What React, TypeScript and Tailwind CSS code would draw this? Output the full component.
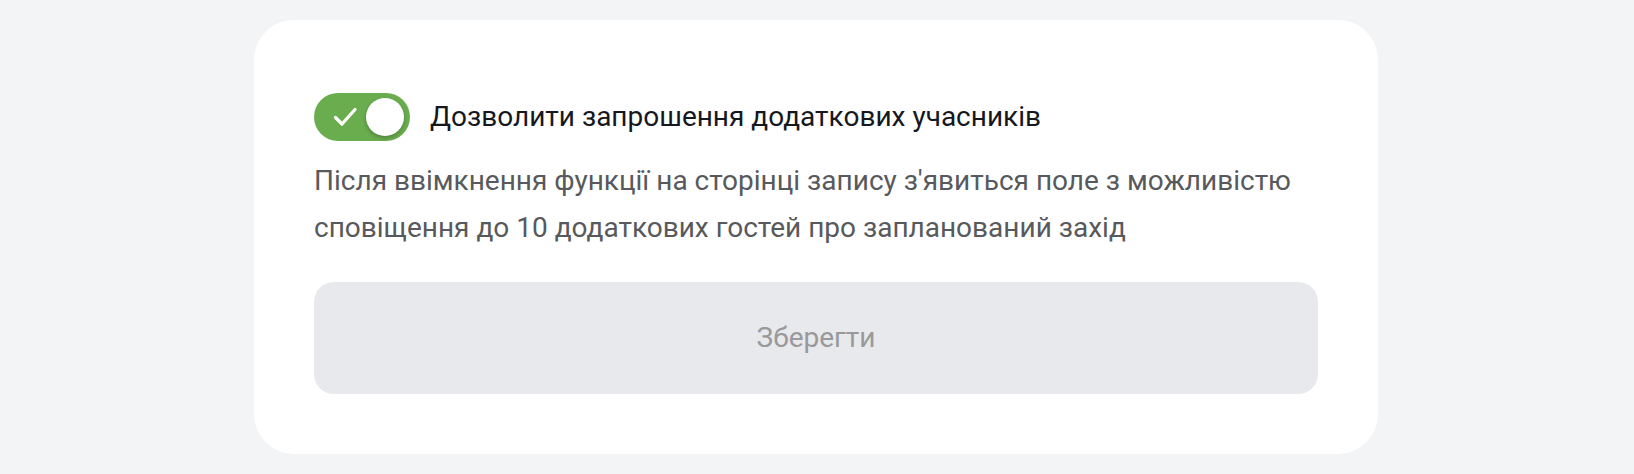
export default function App() {
  return (
    <div className="min-h-screen w-full bg-[#f3f4f6] pt-5 pl-[254px]" style={{ fontFamily: "Roboto, 'Noto Sans', sans-serif" }}>
      <div className="w-[1124px] h-[434px] rounded-[40px] bg-white px-[60px] pt-[73px]">
        {/* toggle row */}
        <div className="flex items-center gap-[20px]">
          <button
            type="button"
            className="relative flex h-[48px] w-[96px] shrink-0 items-center rounded-full bg-[#6aad4f]"
            aria-pressed="true"
          >
            <svg className="absolute left-[19px] top-[13px]" width="24" height="22" viewBox="0 0 24 22" fill="none">
              <path d="M2.5 11.5 L9 18 L22 3.5" stroke="white" strokeWidth="3.2" strokeLinecap="round" strokeLinejoin="round" />
            </svg>
            <span className="absolute right-[6px] top-[5px] h-[38px] w-[38px] rounded-full bg-white shadow-[0_2px_4px_rgba(0,0,0,0.25)]" />
          </button>
          <span className="text-[28px] leading-[34px] text-[#16181d]">
            Дозволити запрошення додаткових учасників
          </span>
        </div>

        <p className="mt-[16px] text-[28px] leading-[47px] text-[#58595c]">
          Після ввімкнення функції на сторінці запису з'явиться поле з можливістю
          <br />
          сповіщення до 10 додаткових гостей про запланований захід
        </p>

        <button
          type="button"
          disabled
          className="mt-[31px] flex h-[112px] w-full items-center justify-center rounded-[20px] bg-[#e8e9ec] text-[28px] text-[#98999c]"
        >
          Зберегти
        </button>
      </div>
    </div>
  );
}
